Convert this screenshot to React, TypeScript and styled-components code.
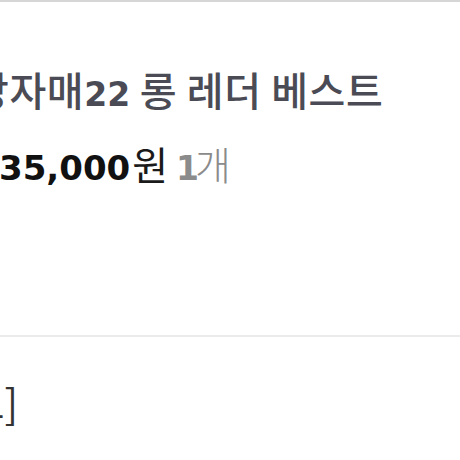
import styled, { createGlobalStyle } from "styled-components";

const GlobalStyle = createGlobalStyle`
  html, body {
    margin: 0;
    padding: 0;
    background: #ffffff;
  }
  body {
    font-family: "Noto Sans CJK KR", "Noto Sans", sans-serif;
  }
`;

export default function App() {
  return (
    <>
      <GlobalStyle />
      <Page>
        <ProductInfo>
          <Title>
            강자매<Num>22</Num> 롱 레더 베스트
          </Title>
          <PriceRow>
            <Price>35,000</Price>
            <Unit>원</Unit>
            <Quantity>
              <Num $tight>1</Num>개
            </Quantity>
          </PriceRow>
        </ProductInfo>
        <Divider />
        <Notice>
          <NoticeText>[배송 안내 필독 공지사항 및 주의사항 모음 노트]</NoticeText>
        </Notice>
      </Page>
    </>
  );
}

const Page = styled.div`
  width: 460px;
  height: 460px;
  overflow: hidden;
  display: flex;
  flex-direction: column;
  border-top: 2px solid #d6d6d6;
  box-sizing: border-box;
`;

const ProductInfo = styled.section`
  display: flex;
  flex-direction: column;
  gap: 18px;
  height: 333px;
  padding-top: 62px;
  box-sizing: border-box;
  overflow: hidden;
`;

const Title = styled.h2`
  margin: 0 0 0 -28px;
  font-size: 40px;
  font-weight: 500;
  line-height: 50px;
  color: #4a4b55;
  white-space: nowrap;
  letter-spacing: 0.6px;
`;

const Num = styled.span<{ $tight?: boolean }>`
  font-family: "DejaVu Sans", sans-serif;
  font-size: 33px;
  font-weight: 700;
  letter-spacing: ${({ $tight }) => ($tight ? "-4px" : "0")};
`;

const PriceRow = styled.div`
  display: flex;
  align-items: baseline;
  margin-left: -1px;
  white-space: nowrap;
  line-height: 50px;
`;

const Price = styled.span`
  font-family: "DejaVu Sans", sans-serif;
  font-size: 34px;
  font-weight: 700;
  color: #111111;
`;

const Unit = styled.span`
  margin-left: 2px;
  font-size: 39px;
  font-weight: 400;
  color: #1a1a1a;
`;

const Quantity = styled.span`
  margin-left: 8px;
  font-size: 39px;
  font-weight: 300;
  color: #8b8b8b;
`;

const Divider = styled.hr`
  margin: 0;
  border: none;
  height: 2px;
  background: #ebebeb;
`;

const Notice = styled.section`
  display: flex;
  justify-content: flex-end;
  width: 18px;
  padding-top: 40px;
`;

const NoticeText = styled.p`
  margin: 0;
  font-size: 40px;
  font-weight: 400;
  line-height: 50px;
  color: #333333;
  white-space: nowrap;
`;
